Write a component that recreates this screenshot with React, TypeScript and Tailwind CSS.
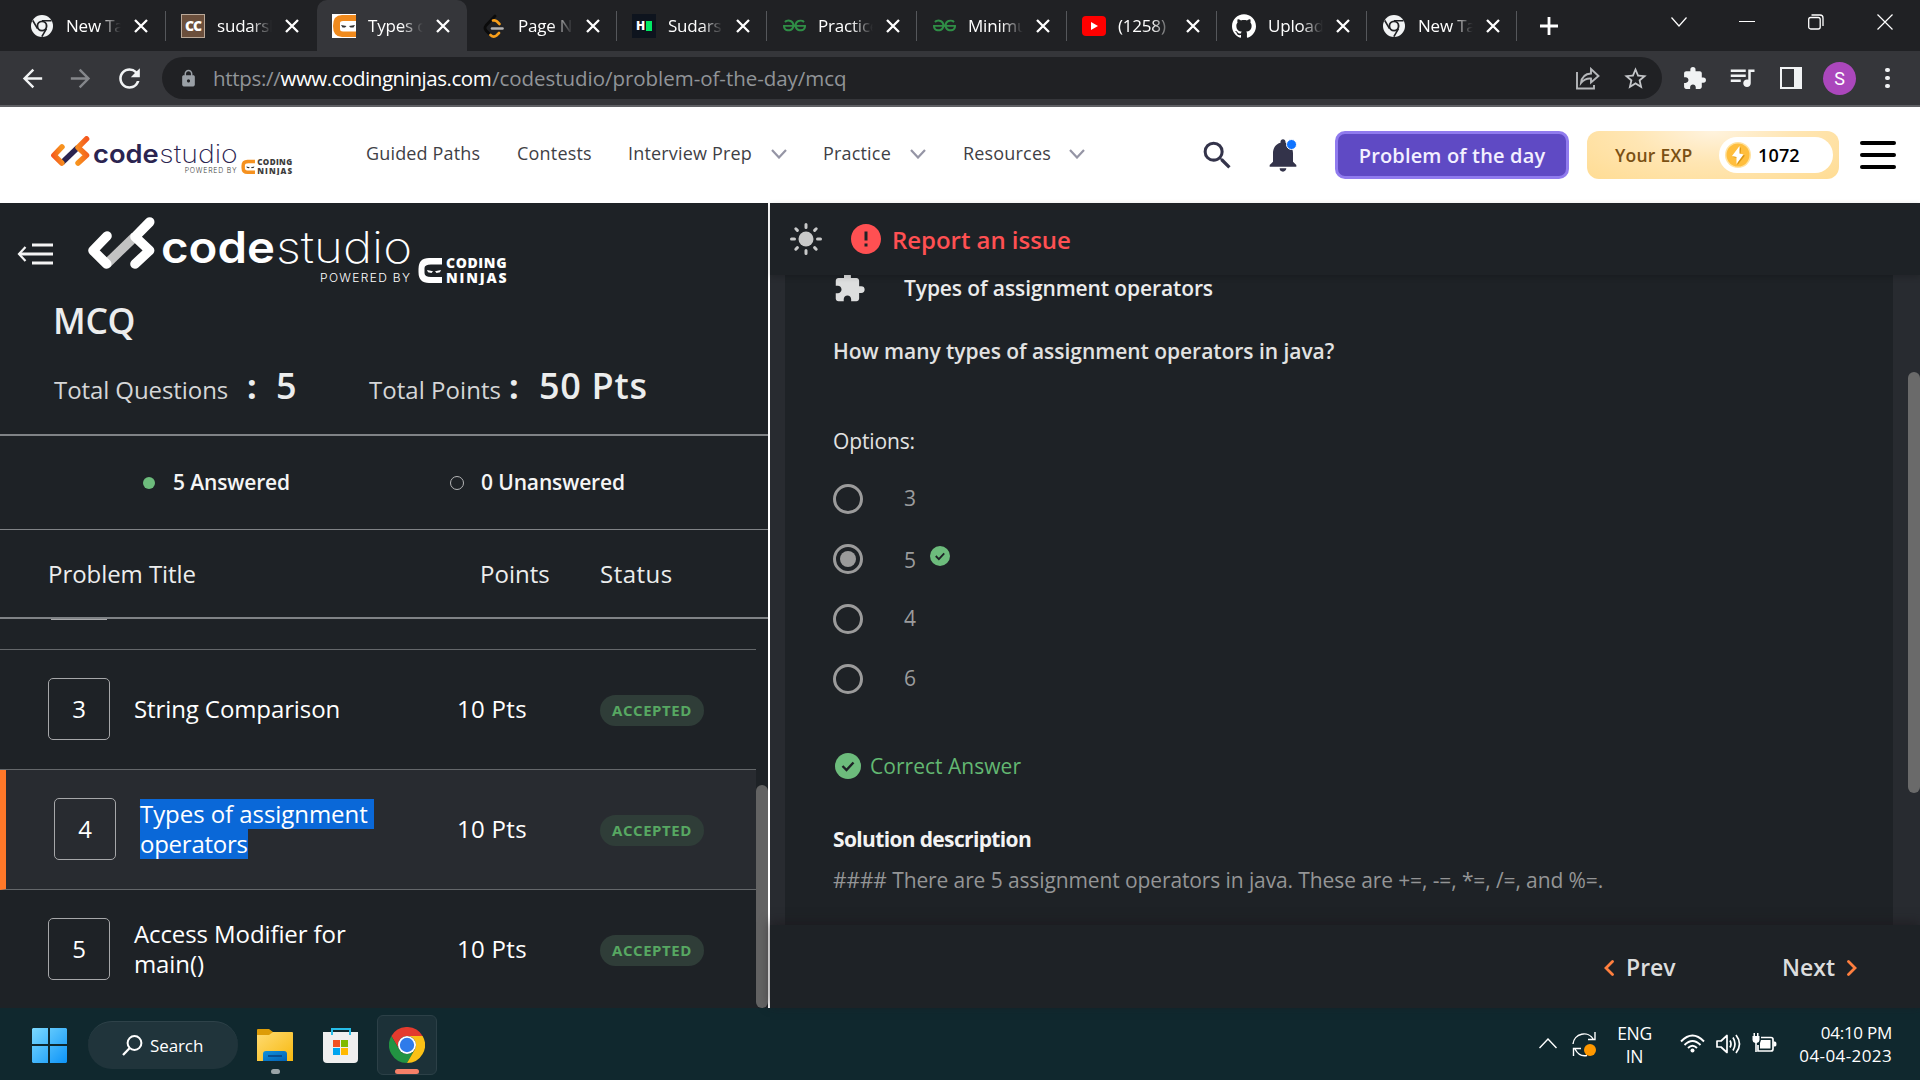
import type { ReactNode } from "react";
import {
  MdArrowBack,
  MdArrowForward,
  MdError,
  MdExtension,
  MdLock,
  MdNotifications,
  MdQueueMusic,
  MdRefresh,
  MdSearch,
  MdStarBorder,
} from "react-icons/md";
import { SiGeeksforgeeks, SiGithub } from "react-icons/si";

/* ---------- Shared drawings ---------- */

function BrandLogo({ width, height, dark }: { width: number; height: number; dark?: boolean }) {
  const ink = dark ? "#ffffff" : "#2b2450";
  const sub = dark ? "#ffffff" : "#3c3c3c";
  const arrow = dark ? "#ffffff" : "url(#brandArrow)";
  const ninja = dark ? "#ffffff" : "#f5911f";
  return (
    <svg width={width} height={height} viewBox="0 0 420 68" className="block shrink-0">
      <defs>
        <linearGradient id="brandArrow" gradientUnits="userSpaceOnUse" x1="0" y1="35" x2="66" y2="20">
          <stop offset="0" stopColor="#f4511e" />
          <stop offset="0.3" stopColor="#f7921e" />
          <stop offset="0.62" stopColor="#f7941e" />
          <stop offset="1" stopColor="#f4581e" />
        </linearGradient>
      </defs>
      <path d="M19 46.5 L47 19.5" stroke={dark ? "#c2c2c2" : "#2b2450"} strokeWidth="9.4" fill="none" />
      <g stroke={arrow} strokeWidth="9.6" strokeLinecap="round" strokeLinejoin="round" fill="none">
        <path d="M19 19 L5 33.5 L18.7 47" />
        <path d="M61.7 5 L47 19.8 L61.6 33.4 L47 47" />
      </g>
      <text x="73" y="46" fontFamily="Inter, sans-serif" fontSize="44" fontWeight="600" fill={ink} textLength="114" lengthAdjust="spacingAndGlyphs">
        code
      </text>
      <text x="188" y="46" fontFamily="Inter, sans-serif" fontSize="44" fontWeight="200" fill={ink} textLength="136" lengthAdjust="spacingAndGlyphs">
        studio
      </text>
      <text x="232" y="65" fontFamily="Inter, sans-serif" fontSize="12" fontWeight="300" fill={sub} textLength="90" lengthAdjust="spacing">
        POWERED BY
      </text>
      <path d="M354 41 H341 Q330.500 41 330.500 52 V55 Q330.500 66 341 66 H354 V60 H343 Q336.500 60 336.500 56 V51 Q336.500 47.500 343 47.500 H354 Z" fill={ninja} />
      <path d="M339 53 L345 54.300 L343.500 56 L340 55.300 Z M353 53 L347 54.300 L348.500 56 L352 55.300 Z" fill={dark ? "#ffffff" : "#333333"} />
      <text x="358" y="51" fontFamily="Open Sans, sans-serif" fontSize="14" fontWeight="800" fill={sub} textLength="60.5" lengthAdjust="spacing">
        CODING
      </text>
      <text x="358" y="65.500" fontFamily="Open Sans, sans-serif" fontSize="14" fontWeight="800" fill={sub} textLength="60.5" lengthAdjust="spacing">
        NINJAS
      </text>
    </svg>
  );
}

function Check({ size }: { size: number }) {
  return (
    <svg width={size} height={size} viewBox="0 0 26 26" className="block shrink-0">
      <circle cx="13" cy="13" r="13" fill="#6dbc7c" />
      <path d="M7.500 13 L11.500 17 L18.500 9.500" fill="none" stroke="#1e2226" strokeWidth="2.400" />
    </svg>
  );
}

function Cross() {
  return (
    <svg width="14" height="14" viewBox="0 0 14 14" className="block shrink-0">
      <path d="M1 1 L13 13 M13 1 L1 13" stroke="#ffffff" strokeWidth="2.300" />
    </svg>
  );
}

/* ---------- Browser tabs ---------- */

const chromeMono = (
  <svg width="22" height="22" viewBox="0 0 36 36">
    <circle cx="18" cy="18" r="18" fill="#f1f3f4" />
    <path d="M18 9.500 H33.500 M10.600 22.300 L2.900 9 M25.400 22.300 L17.700 35.500" stroke="#202124" strokeWidth="2.600" />
    <circle cx="18" cy="18" r="9" fill="#202124" />
    <circle cx="18" cy="18" r="6" fill="#f1f3f4" />
  </svg>
);

const leetcode = (
  <svg width="22" height="24" viewBox="0 0 22 24">
    <path d="M12 2 L3 11.500 Q1 14 3 16.500 L6 19.500" fill="none" stroke="#0b0b0b" strokeWidth="2.800" strokeLinecap="round" />
    <path d="M10 6.500 Q12.500 6 14 7.500 L16.500 10" fill="none" stroke="#f89f1b" strokeWidth="2.600" strokeLinecap="round" />
    <path d="M7.500 21 Q10.500 24 13.500 21.500 L16 19" fill="none" stroke="#f89f1b" strokeWidth="2.600" strokeLinecap="round" />
    <path d="M9 14.500 H19.500" stroke="#b3b3b3" strokeWidth="2.600" strokeLinecap="round" />
  </svg>
);

const ninjaFavicon = (
  <svg width="24" height="24" viewBox="0 0 24 24">
    <rect width="24" height="24" fill="#ffffff" />
    <path d="M24 1 H10 Q1 1 1 12 Q1 23 10 23 H24 V17.500 H11 Q8 17.500 8 15 V9 Q8 7 11 7 H24 Z" fill="#f08a1d" />
    <path d="M9 11 L14.500 12 L13 13.500 H10.500 Z M23 11 L17 12 L18.500 13.500 H21.500 Z" fill="#333333" />
  </svg>
);

const tabs: { title: string; icon: ReactNode; active?: boolean; line?: boolean; wide?: boolean }[] = [
  { title: "New Tab", icon: chromeMono, line: true, wide: true },
  {
    title: "sudarsh",
    icon: (
      <span className="flex h-6 w-6 items-center justify-center border border-[#b9a898] bg-[#6b4f3c] text-[14px] font-extrabold tracking-[-1px] text-white">
        CC
      </span>
    ),
    wide: true,
  },
  { title: "Types of", icon: ninjaFavicon, active: true },
  { title: "Page No", icon: leetcode, line: true },
  {
    title: "Sudars",
    icon: (
      <span className="flex h-6 w-6 items-center justify-center gap-px bg-[#0e141e] text-[12px] font-extrabold text-white">
        H<span className="block h-[10px] w-[6px] bg-[#00ea64]" />
      </span>
    ),
    line: true,
  },
  { title: "Practice", icon: <SiGeeksforgeeks size={23} color="#2f8d46" />, line: true },
  { title: "Minimu", icon: <SiGeeksforgeeks size={23} color="#2f8d46" />, line: true },
  {
    title: "(1258)",
    icon: (
      <span className="flex h-5 w-6 items-center justify-center rounded-[4px] bg-[#ff0000]">
        <svg width="7" height="8" viewBox="0 0 7 8">
          <path d="M0 0 L7 4 L0 8 Z" fill="#ffffff" />
        </svg>
      </span>
    ),
    line: true,
  },
  { title: "Upload", icon: <SiGithub size={24} color="#ffffff" />, line: true },
  { title: "New Tab", icon: chromeMono, line: true },
];

function TabStrip() {
  return (
    <div className="flex h-[51px] bg-[#202124] pl-[15px]">
      {tabs.map((t, i) => (
        <div
          key={i}
          className={
            t.active
              ? "flex h-[51px] w-[150px] items-center rounded-t-[10px] bg-[#35363a]"
              : t.wide
                ? "flex h-[51px] w-[151px] items-center"
                : "flex h-[51px] w-[150px] items-center"
          }
        >
          <span className="ml-[15px] flex w-6 justify-center">{t.icon}</span>
          <span className="ml-3 w-[56px] overflow-hidden whitespace-nowrap text-[17px] tracking-[-0.2px] text-white [mask-image:linear-gradient(to_right,#000_60%,transparent_98%)]">
            {t.title}
          </span>
          <span className="ml-[12px]">
            <Cross />
          </span>
          {t.line && <span className="ml-auto block h-[30px] w-px bg-[#55575b]" />}
        </div>
      ))}
      <svg width="18" height="18" viewBox="0 0 18 18" className="ml-[23px] mt-[17px]">
        <path d="M9 0 V18 M0 9 H18" stroke="#ffffff" strokeWidth="2.800" />
      </svg>
      <svg width="16" height="10" viewBox="0 0 16 10" className="ml-[113px] mt-[17px]">
        <path d="M0.500 0.500 L8 9 L15.500 0.500" fill="none" stroke="#ffffff" strokeWidth="1.200" />
      </svg>
      <span className="ml-[52px] mt-[21px] block h-px w-[16px] bg-white" />
      <svg width="16" height="16" viewBox="0 0 16 16" className="ml-[53px] mt-[14px]">
        <rect x="0.700" y="3.500" width="11.500" height="11.500" rx="2" fill="none" stroke="#ffffff" strokeWidth="1.300" />
        <path d="M3.500 1 H12 Q15 1 15 4 V12" fill="none" stroke="#ffffff" strokeWidth="1.300" />
      </svg>
      <svg width="16" height="16" viewBox="0 0 16 16" className="ml-[53px] mt-[14px]">
        <path d="M0.500 0.500 L15.500 15.500 M15.500 0.500 L0.500 15.500" stroke="#ffffff" strokeWidth="1.200" />
      </svg>
    </div>
  );
}

function Toolbar() {
  return (
    <div className="flex h-14 items-center border-b-2 border-[#5f6064] bg-[#35363a]">
      <MdArrowBack size={29} color="#f1f3f4" className="ml-[18px]" />
      <MdArrowForward size={29} color="#85878b" className="ml-[19px]" />
      <MdRefresh size={31} color="#f1f3f4" className="ml-[19px]" />
      <div className="ml-[17px] flex h-[42px] w-[1500px] items-center rounded-full bg-[#202124]">
        <MdLock size={19} color="#9aa0a6" className="ml-[17px]" />
        <span className="ml-[15px] flex whitespace-nowrap text-[20.500px] text-[#919498]">
          <span className="w-[67.500px] tracking-[-0.300px]">https://</span>
          <span className="w-[211.500px] tracking-[-0.450px] text-white">www.codingninjas.com</span>
          <span className="tracking-[-0.040px]">/codestudio/problem-of-the-day/mcq</span>
        </span>
        <svg width="24" height="23" viewBox="0 0 24 23" className="ml-auto" fill="none" stroke="#b5b7ba" strokeWidth="1.900">
          <path d="M1 5 V21.500 H18 V18" />
          <path d="M5 16 Q6 7 15 6.500 V2 L22.500 9 L15 15.500 V11.500 Q9 11 5 16 Z" />
        </svg>
        <MdStarBorder size={27} color="#c4c6c9" className="ml-[22px] mr-[13px]" />
      </div>
      <MdExtension size={25} color="#f1f3f4" className="ml-[20px]" />
      <MdQueueMusic size={30} color="#f1f3f4" className="-mt-[2px] ml-[20px]" />
      <span className="ml-[23px] block h-[22px] w-[22px] border-2 border-r-[8px] border-[#f1f3f4]" />
      <span className="ml-[21px] flex h-[33px] w-[33px] items-center justify-center rounded-full bg-[#ab47bc] font-[Roboto] text-[18px] text-white">
        S
      </span>
      <span className="ml-[29px] flex flex-col gap-[3.500px]">
        <span className="block h-[4.500px] w-[4.500px] rounded-full bg-[#f1f3f4]" />
        <span className="block h-[4.500px] w-[4.500px] rounded-full bg-[#f1f3f4]" />
        <span className="block h-[4.500px] w-[4.500px] rounded-full bg-[#f1f3f4]" />
      </span>
    </div>
  );
}

/* ---------- Site navigation ---------- */

function NavChevron() {
  return (
    <svg width="16" height="10" viewBox="0 0 16 10" className="block shrink-0">
      <path d="M1 1 L8 8.500 L15 1" fill="none" stroke="#9595a5" strokeWidth="2.200" />
    </svg>
  );
}

function SiteNav() {
  return (
    <div className="flex h-24 items-center bg-white text-[18px] text-[#3f3f46]">
      <div className="ml-[51px] mt-px w-[242px]">
        <BrandLogo width={242} height={39.200} />
      </div>
      <div className="-mt-[3px] ml-[73px] flex items-center whitespace-nowrap">
        <span className="w-[151px] tracking-[0.160px]">Guided Paths</span>
        <span className="w-[111px] tracking-[0.200px]">Contests</span>
        <span className="w-[143px] tracking-[0.180px]">Interview Prep</span>
        <NavChevron />
        <span className="ml-[36px] w-[87px] tracking-[0.180px]">Practice</span>
        <NavChevron />
        <span className="ml-[37px] w-[106px] tracking-[0.180px]">Resources</span>
        <NavChevron />
      </div>
      <MdSearch size={37} color="#33334a" className="ml-[114px]" />
      <div className="relative ml-[27px]">
        <MdNotifications size={40} color="#33334a" />
        <span className="absolute right-[6px] top-[4px] block h-[11px] w-[11px] rounded-full border border-white bg-[#0f73ff]" />
      </div>
      <span className="ml-[32px] flex h-12 w-[234px] items-center justify-center whitespace-nowrap rounded-[10px] border-[3px] border-[#907bee] bg-[#5f4ac4] pt-px text-[20px] font-semibold tracking-[0.160px] text-[#f3f0ff]">
        Problem of the day
      </span>
      <div className="ml-[18px] flex h-12 w-[252px] items-center rounded-[12px] bg-[radial-gradient(ellipse_at_50%_0%,#fff3de_0%,#ffe6b4_45%,#ffdc93_100%)]">
        <span className="ml-[28px] w-[104px] whitespace-nowrap text-[17.500px] font-semibold tracking-[0.240px] text-[#7a5013]">Your EXP</span>
        <span className="flex h-9 w-[114px] items-center rounded-full bg-white">
          <svg width="26" height="26" viewBox="0 0 26 26" className="ml-[6px]">
            <circle cx="13" cy="13" r="13" fill="#ffe2a0" />
            <circle cx="13" cy="13" r="11.500" fill="#ffbe3d" />
            <path d="M16 5 L8 15 L12.500 16 L12.500 23 L20 13.500 L15.500 12.500 Z" fill="#d99514" />
            <path d="M14.500 4 L7 14 L11.500 15 L11.500 22 L18.500 12.500 L14.500 11.500 Z" fill="#ffffff" />
          </svg>
          <span className="ml-[7px] text-[18px] font-semibold tracking-[0.150px] text-black">1072</span>
        </span>
      </div>
      <div className="ml-[21px] flex w-9 flex-col gap-2">
        <span className="block h-1 rounded-full bg-black" />
        <span className="block h-1 rounded-full bg-black" />
        <span className="block h-1 rounded-full bg-black" />
      </div>
    </div>
  );
}

/* ---------- Problem list ---------- */

const problems = [
  { no: "3", lines: ["String Comparison"] },
  { no: "4", lines: ["Types of assignment", "operators"], current: true },
  { no: "5", lines: ["Access Modifier for", "main()"] },
];

function ProblemRow({ no, lines, current }: { no: string; lines: string[]; current?: boolean }) {
  return (
    <div
      className={
        current
          ? "flex h-[120px] shrink-0 items-center border-b border-l-[6px] border-b-[#64676a] border-l-[#ff7829] bg-[#282b30]"
          : "flex h-[120px] shrink-0 items-center border-b border-[#64676a]"
      }
    >
      <span className="-mt-[2px] ml-12 flex h-[62px] w-[62px] shrink-0 items-center justify-center rounded-[5px] border border-[#a6a7a9] text-[24px] font-medium">
        {no}
      </span>
      <div className={current ? "-mt-[2px] ml-6 w-[317px]" : "-mt-[2px] ml-6 w-[323px]"}>
        {lines.map((line, i) => (
          <span
            key={line}
            className={
              !current
                ? "block w-fit whitespace-nowrap text-[24px] font-medium leading-[30px] tracking-[-0.100px]"
                : i === 0
                  ? "block w-fit whitespace-nowrap bg-[#0a68d8] pr-[6px] text-[24px] font-medium leading-[30px] tracking-[-0.060px]"
                  : "block w-fit whitespace-nowrap bg-[#0a68d8] text-[24px] font-medium leading-[30px] tracking-[-0.250px]"
            }
          >
            {line}
          </span>
        ))}
      </div>
      <span className="-mt-px w-[143px] whitespace-nowrap text-[24px] font-medium tracking-[0.300px]">10 Pts</span>
      <span className="mt-px flex h-[31px] w-[104px] items-center justify-center rounded-full bg-[#2f3d38] text-[15px] font-bold tracking-[0.550px] text-[#57a862]">
        ACCEPTED
      </span>
    </div>
  );
}

function LeftPanel() {
  return (
    <div className="flex w-[768px] shrink-0 flex-col text-[#eceded]">
      <div className="flex h-[84px] items-start pt-[14px]">
        <svg width="36" height="24" viewBox="0 0 36 24" className="ml-[17px] mt-[25px]" fill="none" stroke="#f4f4f4">
          <path d="M15 3 H36 M2 12 H36 M15 21 H36" strokeWidth="2.800" />
          <path d="M8.500 5 L2 12 L8.500 19" strokeWidth="2.200" />
        </svg>
        <div className="ml-[35px]">
          <BrandLogo width={420} height={68} dark />
        </div>
      </div>
      <div className="ml-[53px] mt-[9px] h-[48px] text-[35.500px] font-semibold leading-[48px] tracking-[-0.300px]">MCQ</div>
      <div className="ml-[54px] mt-[14px] flex h-[56px] items-center whitespace-nowrap">
        <span className="mt-[7px] w-[193px] text-[24px] font-medium tracking-[-0.080px] text-[#d5d6d7]">Total Questions</span>
        <span className="w-[29px] text-[34px] font-bold">:</span>
        <span className="w-[93px] text-[36px] font-semibold">5</span>
        <span className="mt-[7px] w-[140px] text-[24px] font-medium tracking-[0.040px] text-[#d5d6d7]">Total Points</span>
        <span className="w-[30px] text-[34px] font-bold">:</span>
        <span className="text-[36px] font-semibold tracking-[0.700px]">50 Pts</span>
      </div>
      <div className="mt-[20px] h-[2px] bg-[#808386]" />
      <div className="flex h-[93px] items-center text-[21px] font-semibold tracking-[-0.140px] text-[#f5f5f5]">
        <span className="ml-[143px] block h-3 w-3 rounded-full bg-[#6dbc7c]" />
        <span className="ml-[18px] mt-px w-[277px]">5 Answered</span>
        <span className="block h-[14px] w-[14px] rounded-full border border-[#b5b6b7]" />
        <span className="ml-[17px] mt-px">0 Unanswered</span>
      </div>
      <div className="flex h-[88px] items-center border-t border-[#808386] text-[24px] font-medium">
        <span className="ml-12 w-[432px] tracking-[-0.060px]">Problem Title</span>
        <span className="w-[120px]">Points</span>
        <span className="tracking-[0.500px]">Status</span>
      </div>
      <div className="h-[2px] bg-[#808386]" />
      <div className="flex h-[389px]">
        <div className="flex w-[756px] flex-col overflow-hidden text-white">
          <div className="flex h-[31px] shrink-0 border-b border-[#64676a]">
            <span className="ml-[51px] block h-px w-[56px] bg-[#a6a7a9]" />
          </div>
          {problems.map((p) => (
            <ProblemRow key={p.no} {...p} />
          ))}
        </div>
        <div className="flex w-3 flex-col justify-end">
          <span className="block h-[223px] rounded-full bg-[#636363]" />
        </div>
      </div>
    </div>
  );
}

/* ---------- Question ---------- */

const options = ["3", "5", "4", "6"];

function RightPanel() {
  return (
    <div className="flex min-w-0 flex-1 flex-col">
      <div className="z-10 flex h-[72px] shrink-0 items-center shadow-[0_2px_6px_rgba(0,0,0,0.18)]">
        <svg width="34" height="34" viewBox="0 0 34 34" className="ml-[19px]" stroke="#c9caca" strokeWidth="3" strokeLinecap="round">
          <circle cx="17" cy="17" r="7.500" fill="#c9caca" stroke="none" />
          <path d="M17 2.500 V5.500 M17 28.500 V31.500 M2.500 17 H5.500 M28.500 17 H31.500 M6.800 6.800 L8.400 8.400 M25.600 25.600 L27.200 27.200 M6.800 27.200 L8.400 25.600 M25.600 8.400 L27.200 6.800" />
        </svg>
        <MdError size={36} color="#ff5052" className="ml-[25px]" />
        <span className="ml-[8px] mt-px text-[24px] font-semibold tracking-[-0.040px] text-[#ff5052]">Report an issue</span>
      </div>
      <div className="flex h-[650px] shrink-0">
        <div className="w-[15px] bg-[#282b30]" />
        <div className="flex w-[1108px] flex-col overflow-hidden pl-12 text-[21px]">
          <div className="-mt-[6px] flex h-[38px] shrink-0 items-center">
            <MdExtension size={33} color="#dddede" className="-mt-px" />
            <span className="ml-[38px] mt-[2px] font-semibold tracking-[-0.110px] text-[#ececec]">Types of assignment operators</span>
          </div>
          <span className="mt-[28px] h-[32px] font-semibold leading-[32px] tracking-[-0.040px] text-[#e2e2e2]">
            How many types of assignment operators in java?
          </span>
          <span className="mt-[58px] h-[32px] font-medium leading-[32px] tracking-[-0.130px] text-[#e2e2e2]">Options:</span>
          <div className="mt-[12px] flex flex-col">
            {options.map((o) => (
              <div key={o} className="flex h-[60px] items-center text-[#9b9c9d]">
                <span className="flex h-[30px] w-[30px] items-center justify-center rounded-full border-[3px] border-[#9b9b9b]">
                  {o === "5" && <span className="block h-4 w-4 rounded-full bg-[#9b9b9b]" />}
                </span>
                <span className={o === "5" ? "ml-[41px] mt-[3px] w-[26px]" : "ml-[41px] w-[26px]"}>{o}</span>
                {o === "5" && (
                  <span className="-mt-[6px]">
                    <Check size={20} />
                  </span>
                )}
              </div>
            ))}
          </div>
          <div className="mt-[42px] flex h-[30px] items-center">
            <span className="ml-[2px]">
              <Check size={26} />
            </span>
            <span className="ml-[9px] mt-[2px] tracking-[0.030px] text-[#63b872]">Correct Answer</span>
          </div>
          <span className="mt-[42px] h-[32px] text-[21px] font-bold leading-[32px] tracking-[-0.650px] text-[#f3f3f3]">Solution description</span>
          <span className="mt-[9px] h-[32px] whitespace-nowrap leading-[32px] tracking-[-0.110px] text-[#949596]">
            #### There are 5 assignment operators in java. These are +=, -=, *=, /=, and %=.
          </span>
        </div>
        <div className="flex flex-1 justify-end bg-[#282b30] pt-[97px]">
          <span className="block h-[421px] w-3 rounded-full bg-[#6a6a6a]" />
        </div>
      </div>
      <div className="z-10 flex flex-1 items-center pt-[2px] text-[23px] font-semibold text-[#dcdddd] shadow-[0_-3px_10px_rgba(28,24,28,0.6)]">
        <svg width="10" height="16" viewBox="0 0 10 16" className="ml-[834px]">
          <path d="M8.500 1.500 L2 8 L8.500 14.500" fill="none" stroke="#ff7f3f" strokeWidth="2.800" strokeLinecap="round" />
        </svg>
        <span className="ml-[12px] w-[156px]">Prev</span>
        <span className="w-[65px]">Next</span>
        <svg width="10" height="16" viewBox="0 0 10 16">
          <path d="M1.500 1.500 L8 8 L1.500 14.500" fill="none" stroke="#ff7f3f" strokeWidth="2.800" strokeLinecap="round" />
        </svg>
      </div>
    </div>
  );
}

/* ---------- Desktop taskbar ---------- */

function Taskbar() {
  return (
    <div className="flex h-[72px] bg-[#10282e] text-white">
      <svg width="36" height="36" viewBox="0 0 36 36" className="ml-[31px] mt-[19px]">
        <defs>
          <linearGradient id="winTile" x1="0" y1="0" x2="36" y2="36" gradientUnits="userSpaceOnUse">
            <stop offset="0" stopColor="#7fdcff" />
            <stop offset="1" stopColor="#0d94f8" />
          </linearGradient>
        </defs>
        <path d="M2 1 H17 V17 H1 V2 Z M19 1 H35 L36 2 V17 H19 Z M1 19 H17 V36 H2 L1 35 Z M19 19 H36 V35 L35 36 H19 Z" fill="url(#winTile)" />
      </svg>
      <div className="ml-[21px] mt-[13px] flex h-12 w-[150px] items-center rounded-full border-t border-[#2e4249] bg-[#20343b]">
        <svg width="21" height="21" viewBox="0 0 21 21" className="ml-[34px]">
          <circle cx="12.500" cy="8" r="6.900" fill="none" stroke="#ffffff" strokeWidth="2" />
          <path d="M7.500 13.300 L1 20" stroke="#ffffff" strokeWidth="2.300" />
        </svg>
        <span className="ml-[7px] text-[17px] tracking-[-0.100px]">Search</span>
      </div>
      <div className="ml-[19px] mt-[20px] flex w-9 flex-col items-center">
        <svg width="36" height="34" viewBox="0 0 36 34">
          <defs>
            <linearGradient id="folder" x1="0" y1="0" x2="1" y2="1">
              <stop offset="0" stopColor="#ffdb72" />
              <stop offset="1" stopColor="#f7b90f" />
            </linearGradient>
            <linearGradient id="folderBand" x1="0" y1="0" x2="1" y2="1">
              <stop offset="0" stopColor="#1191dc" />
              <stop offset="1" stopColor="#0261b4" />
            </linearGradient>
          </defs>
          <path d="M0 2 Q0 1 1 1 H12 L16 4 H20 V12 H0 Z" fill="#dd9c08" />
          <path d="M0 7 H12 L16 4 H35 Q36 4 36 5 V33 H0 Z" fill="url(#folder)" />
          <path d="M6 33 V26 Q6 23 9 23 H27 Q30 23 30 26 V33 Z" fill="url(#folderBand)" />
          <path d="M11 28 H25" stroke="#0a4a8a" strokeWidth="1.800" />
        </svg>
        <span className="mt-[7px] block h-[5px] w-[9px] rounded-full bg-[#9aa4a7]" />
      </div>
      <svg width="36" height="36" viewBox="0 0 36 36" className="ml-[30px] mt-[20px]">
        <path d="M9 7 V1 H27 V7" fill="none" stroke="#27bde8" strokeWidth="2" />
        <path d="M0 4 H35 V31 Q35 35 31 35 H4 Q0 35 0 31 Z" fill="#efefef" />
        <path d="M9 7 V4 M27 7 V4" stroke="#27bde8" strokeWidth="2" />
        <path d="M10 12 H17 V19 H10 Z" fill="#f25022" />
        <path d="M18 12 H25 V19 H18 Z" fill="#7fba00" />
        <path d="M10 20 H17 V27 H10 Z" fill="#00a4ef" />
        <path d="M18 20 H25 V27 H18 Z" fill="#ffb900" />
      </svg>
      <div className="ml-[18px] mt-[7px] flex h-[60px] w-[60px] flex-col items-center rounded-[6px] border border-[#2c4047] bg-[#1c3138]">
        <svg width="36" height="36" viewBox="0 0 36 36" className="mt-[11px]">
          <path d="M18 9 H33.600 A18 18 0 0 0 2.400 9 L10.200 22.500 A9 9 0 0 1 18 9 Z" fill="#e33b2e" />
          <path d="M2.400 9 A18 18 0 0 0 18 36 L25.800 22.500 A9 9 0 0 1 10.200 22.500 Z" fill="#229342" />
          <path d="M33.600 9 A18 18 0 0 1 18 36 L25.800 22.500 A9 9 0 0 0 18 9 Z" fill="#fbc116" />
          <circle cx="18" cy="18" r="9" fill="#ffffff" />
          <circle cx="18" cy="18" r="7.200" fill="#2f7bea" />
        </svg>
        <span className="mt-[6px] block h-[5px] w-6 rounded-full bg-[#f58068]" />
      </div>
      <svg width="18" height="11" viewBox="0 0 18 11" className="ml-auto mt-[30px]">
        <path d="M0.500 10 L9 1 L17.500 10" fill="none" stroke="#ffffff" strokeWidth="1.400" />
      </svg>
      <svg width="25" height="26" viewBox="0 0 25 26" className="ml-[15px] mt-[23px]" fill="none" stroke="#ffffff" strokeWidth="1.400">
        <path d="M1 13 A11 11 0 0 1 21.500 8.500 M23 1 V8.500 H16" />
        <path d="M15 24.500 Q7 26 3 18 M1.500 25 V17.500 H9" />
        <circle cx="18" cy="19" r="6" fill="#ff9800" stroke="none" />
      </svg>
      <div className="ml-[17px] mt-[14px] flex w-[41px] flex-col items-center text-[17.500px] leading-[23px] tracking-[-0.300px]">
        <span>ENG</span>
        <span>IN</span>
      </div>
      <svg width="25" height="20" viewBox="0 0 25 20" className="ml-[25px] mt-[26px]" fill="none" stroke="#ffffff" strokeWidth="1.900">
        <path d="M1 7.500 Q12.500 -4.500 24 7.500 M4.500 11 Q12.500 3 20.500 11 M8 14 Q12.500 9.500 17 14" />
        <circle cx="12.500" cy="16.500" r="2" fill="#ffffff" stroke="none" />
      </svg>
      <svg width="25" height="22" viewBox="0 0 25 22" className="ml-[11px] mt-[25px]" fill="none" stroke="#ffffff" strokeWidth="1.700">
        <path d="M1 8 H5 L11 2.500 V19.500 L5 14 H1 Z" strokeLinejoin="round" />
        <path d="M14 7.500 Q16 11 14 14.500 M17 4.500 Q21 11 17 17.500 M20 2 Q27 11 20 20" />
      </svg>
      <svg width="25" height="20" viewBox="0 0 25 20" className="ml-[11px] mt-[25px]">
        <path d="M9 4.500 H19 Q21 4.500 21 6.500 V16 Q21 18 19 18 H6 V12" fill="none" stroke="#ffffff" strokeWidth="1.700" />
        <path d="M9 7 H18.500 V15.500 H8 V10 Z M21.500 8.500 H23 Q24.500 8.500 24.500 11 Q24.500 13.500 23 13.500 H21.500 Z" fill="#ffffff" />
        <path d="M0.500 3 H7.500 V7 Q7.500 9.500 4.800 10 V19 H3.200 V10 Q0.500 9.500 0.500 7 Z M1.500 0 H3 V4 H1.500 Z M5 0 H6.500 V4 H5 Z" fill="#ffffff" />
      </svg>
      <div className="ml-[13px] mr-[28px] mt-[13px] flex w-[102px] flex-col items-end whitespace-nowrap text-[17px] leading-[23px]">
        <span className="tracking-[-0.250px]">04:10 PM</span>
        <span className="tracking-[0.400px]">04-04-2023</span>
      </div>
    </div>
  );
}

export default function App() {
  return (
    <div className="flex h-[1080px] w-[1920px] flex-col overflow-hidden bg-[#1e2226] font-['Open_Sans','Noto_Sans',sans-serif]">
      <TabStrip />
      <Toolbar />
      <SiteNav />
      <div className="flex h-[805px] shrink-0">
        <LeftPanel />
        <div className="w-[2px] shrink-0 bg-white" />
        <RightPanel />
      </div>
      <Taskbar />
    </div>
  );
}
